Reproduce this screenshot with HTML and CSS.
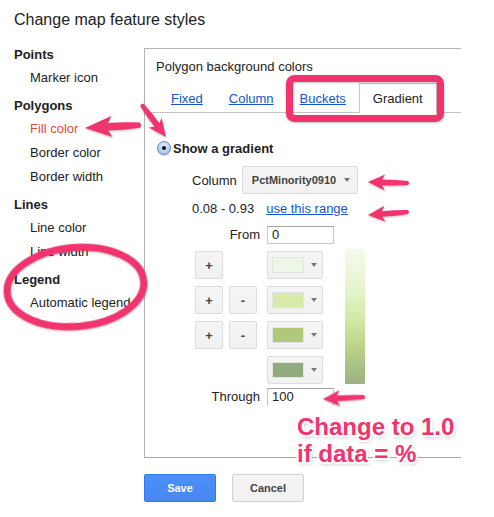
FILE: index.html
```html
<!DOCTYPE html>
<html>
<head>
<meta charset="utf-8">
<link rel="stylesheet" href="styles.css">
</head>
<body>
<div class="page">
  <h1 class="title">Change map feature styles</h1>
  <div class="main">
    <nav class="sidebar">
      <div class="group">Points</div>
      <div class="item">Marker icon</div>
      <div class="group">Polygons</div>
      <div class="item active">Fill color</div>
      <div class="item">Border color</div>
      <div class="item">Border width</div>
      <div class="group">Lines</div>
      <div class="item">Line color</div>
      <div class="item">Line width</div>
      <div class="group">Legend</div>
      <div class="item">Automatic legend</div>
    </nav>
    <section class="panel">
      <div class="panel-title">Polygon background colors</div>
      <div class="tabs">
        <a class="tab">Fixed</a>
        <a class="tab">Column</a>
        <a class="tab">Buckets</a>
        <span class="tab current">Gradient</span>
      </div>
      <div class="radio-row"><span class="radio"><span class="dot"></span></span>Show a gradient</div>
      <div class="column-row">
        <span>Column</span>
        <div class="select">PctMinority0910<span class="caret"></span></div>
      </div>
      <div class="range-row">
        <span>0.08 - 0.93</span>
        <a class="link">use this range</a>
      </div>
      <div class="editor">
        <div class="label from-label">From</div>
        <div class="input from-input">0</div>

        <div class="sq plus r1">+</div>
        <div class="color r1"><span class="swatch s1"></span><span class="caret"></span></div>

        <div class="sq plus r2">+</div>
        <div class="sq minus r2">-</div>
        <div class="color r2"><span class="swatch s2"></span><span class="caret"></span></div>

        <div class="sq plus r3">+</div>
        <div class="sq minus r3">-</div>
        <div class="color r3"><span class="swatch s3"></span><span class="caret"></span></div>

        <div class="color r4"><span class="swatch s4"></span><span class="caret"></span></div>

        <div class="bar"></div>

        <div class="label through-label">Through</div>
        <div class="input through-input">100</div>
      </div>
    </section>
  </div>
  <div class="actions">
    <button class="btn primary">Save</button>
    <button class="btn">Cancel</button>
  </div>

  <svg class="annotations" width="494" height="517" viewBox="0 0 494 517">
    <g class="pink">
      <ellipse cx="75.5" cy="287" rx="68.5" ry="39.5" transform="rotate(-5 75.5 287)" fill="none" stroke="#f2336e" stroke-width="7"/>
      <rect x="289.5" y="78.5" width="151" height="40" rx="5" fill="none" stroke="#f2336e" stroke-width="7"/>
      <path transform="translate(85 128) rotate(-3)" d="M0,0 L27,-10.5 L23,-3.8 Q38,-4.2 55,-2.6 Q57,0 55,2.6 Q38,4.2 23,3.8 L27,10.5 Z"/>
      <path transform="translate(166 137) rotate(233.1)" d="M0,0 L18,-8 L15,-3 Q28,-3.2 40,-2 Q42,0 40,2 Q28,3.2 15,3 L18,8 Z"/>
      <path transform="translate(368 182) rotate(1.4)" d="M0,0 L17,-8 L14,-2.8 Q28,-3 40,-2 Q42,0 40,2 Q28,3 14,2.8 L17,8 Z"/>
      <path transform="translate(368 215) rotate(-4.3)" d="M0,0 L17,-8 L14,-2.8 Q28,-3 40,-2 Q42,0 40,2 Q28,3 14,2.8 L17,8 Z"/>
      <path transform="translate(323 399) rotate(-2.8)" d="M0,0 L17,-8 L14,-2.8 Q28,-3 41,-2 Q43,0 41,2 Q28,3 14,2.8 L17,8 Z"/>
    </g>
  </svg>
  <div class="callout">Change to 1.0<br>if data = %</div>
</div>
</body>
</html>
```

FILE: styles.css
```css
* { box-sizing: border-box; }

html, body {
  margin: 0;
  padding: 0;
  background: #fff;
}

body {
  font-family: "Liberation Sans", Arial, Helvetica, sans-serif;
  font-size: 13px;
  color: #222;
}

.page {
  position: relative;
  width: 494px;
  height: 517px;
  padding: 10px 0 0 14px;
  overflow: hidden;
}

.title {
  margin: 0;
  font-size: 16px;
  line-height: 20px;
  font-weight: normal;
  color: #222;
}

.main {
  display: flex;
  margin-top: 9px;
}

.sidebar {
  width: 130px;
  flex: none;
}

.group {
  font-weight: bold;
  line-height: 23px;
  padding-top: 4px;
}

.item {
  line-height: 24px;
  padding-left: 16px;
}

.item.active {
  color: #dd4b39;
}

.panel {
  margin-top: 9px;
  width: 317px;
  height: 410px;
  border-top: 1px solid #b3b3b3;
  border-left: 1px solid #b3b3b3;
  border-bottom: 1px solid #a8a8a8;
  padding-top: 10px;
}

.panel-title {
  line-height: 16px;
  padding-left: 11px;
}

.tabs {
  display: flex;
  margin-top: 8px;
  height: 30px;
  padding-left: 13px;
  border-bottom: 1px solid #c4c4c4;
}

.tab {
  height: 29px;
  line-height: 29px;
  padding: 0 12px;
  border: 1px solid transparent;
  border-bottom: none;
  color: #1155cc;
  text-decoration: underline;
}

.tab.current {
  color: #222;
  text-decoration: none;
  background: #fff;
  border-color: #c8c8c8;
  height: 30px;
  padding: 0 13px 0 13px;
}

.radio-row {
  display: flex;
  align-items: center;
  height: 16px;
  margin-top: 27px;
  padding-left: 12px;
  font-weight: bold;
}

.radio {
  width: 14px;
  height: 14px;
  margin-right: 2px;
  border-radius: 50%;
  border: 1px solid #6e8db5;
  background: radial-gradient(circle at 50% 35%, #e6f1fd 0%, #a9c8ef 70%, #7fa7dc 100%);
  display: flex;
  align-items: center;
  justify-content: center;
  box-shadow: 0 1px 1px rgba(0,0,0,0.2);
}

.dot {
  width: 4px;
  height: 4px;
  border-radius: 50%;
  background: #111;
}

.column-row {
  display: flex;
  align-items: center;
  height: 28px;
  margin-top: 10px;
  padding-left: 47px;
}

.select {
  display: flex;
  align-items: center;
  margin-left: 5px;
  width: 116px;
  height: 28px;
  padding-left: 9px;
  border: 1px solid #dcdcdc;
  border-radius: 2px;
  background: linear-gradient(#f5f5f5, #f1f1f1);
  font-size: 11px;
  font-weight: bold;
  color: #444;
}

.caret {
  width: 0;
  height: 0;
  border-left: 3.5px solid transparent;
  border-right: 3.5px solid transparent;
  border-top: 4px solid #777;
  margin-left: auto;
  margin-right: 7px;
}

.range-row {
  display: flex;
  line-height: 16px;
  margin-top: 7px;
  padding-left: 47px;
}

.link {
  margin-left: 12px;
  color: #1155cc;
  text-decoration: underline;
}

.editor {
  display: grid;
  grid-template-columns: 28px 28px 56px 20px;
  grid-template-rows: 18px repeat(4, 28px) 18px;
  column-gap: 6px;
  row-gap: 7px;
  margin-top: 9px;
  padding-left: 50px;
}

.editor > .color { margin-left: 4px; }
.editor > .bar { margin-left: 20px; }

.label {
  grid-column: 1 / 3;
  text-align: right;
  padding-right: 1px;
  line-height: 18px;
  margin-right: -4px;
}

.input {
  grid-column: 3;
  width: 67px;
  height: 18px;
  margin-left: 4px;
  border: 1px solid #c6c6c6;
  border-top-color: #a3a3a3;
  padding-left: 4px;
  line-height: 16px;
  background: #fff;
}

.from-label, .from-input { grid-row: 1; }
.through-label, .through-input { grid-row: 6; margin-top: -3px; }
.through-input { border-bottom-color: #fff; }

.r1 { grid-row: 2; }
.r2 { grid-row: 3; }
.r3 { grid-row: 4; }
.r4 { grid-row: 5; }

.sq {
  width: 28px;
  height: 28px;
  border: 1px solid #dcdcdc;
  border-radius: 2px;
  background: linear-gradient(#f5f5f5, #f1f1f1);
  display: flex;
  align-items: center;
  justify-content: center;
  font-weight: bold;
  color: #444;
}

.plus { grid-column: 1; }
.minus { grid-column: 2; }

.color {
  grid-column: 3;
  width: 56px;
  height: 28px;
  border: 1px solid #dcdcdc;
  border-radius: 2px;
  background: linear-gradient(#f5f5f5, #f1f1f1);
  display: flex;
  align-items: center;
  padding-left: 4px;
}

.color .caret { margin-right: 5px; }

.swatch {
  width: 32px;
  height: 16px;
  border: 1px solid #e4e4e4;
}

.s1 { background: #eef6e6; }
.s2 { background: #d8eaa9; }
.s3 { background: #afc87a; }
.s4 { background: #91aa7e; }

.bar {
  grid-column: 4;
  grid-row: 2 / 6;
  align-self: start;
  margin-top: -2px;
  width: 20px;
  height: 135px;
  background: linear-gradient(#f4fbec 0%, #e6f4cd 30%, #d3e8a6 52%, #b7d087 75%, #9bb184 100%);
}

.actions {
  display: flex;
  gap: 16px;
  margin-top: 16px;
  margin-left: 130px;
}

.btn {
  width: 72px;
  height: 28px;
  border: 1px solid #d2d2d2;
  border-radius: 2px;
  background: linear-gradient(#f5f5f5, #f1f1f1);
  font-family: "Liberation Sans", Arial, sans-serif;
  font-size: 11px;
  font-weight: bold;
  color: #444;
  padding: 0;
}

.btn.primary {
  background: linear-gradient(#4d90fe, #4787ed);
  border-color: #3079ed;
  color: #fff;
}

.annotations {
  position: absolute;
  left: 0;
  top: 0;
  pointer-events: none;
}

.pink {
  fill: #f2336e;
  filter: drop-shadow(0 1px 1px rgba(0,0,0,0.25));
}

.callout {
  position: absolute;
  left: 297px;
  top: 413px;
  font-size: 24px;
  line-height: 27px;
  font-weight: bold;
  color: #f2336e;
  text-shadow:
    2px 0 0 #fff, -2px 0 0 #fff, 0 2px 0 #fff, 0 -2px 0 #fff,
    1.5px 1.5px 0 #fff, -1.5px 1.5px 0 #fff, 1.5px -1.5px 0 #fff, -1.5px -1.5px 0 #fff,
    1px 2px 4px rgba(0,0,0,0.35);
}
```
